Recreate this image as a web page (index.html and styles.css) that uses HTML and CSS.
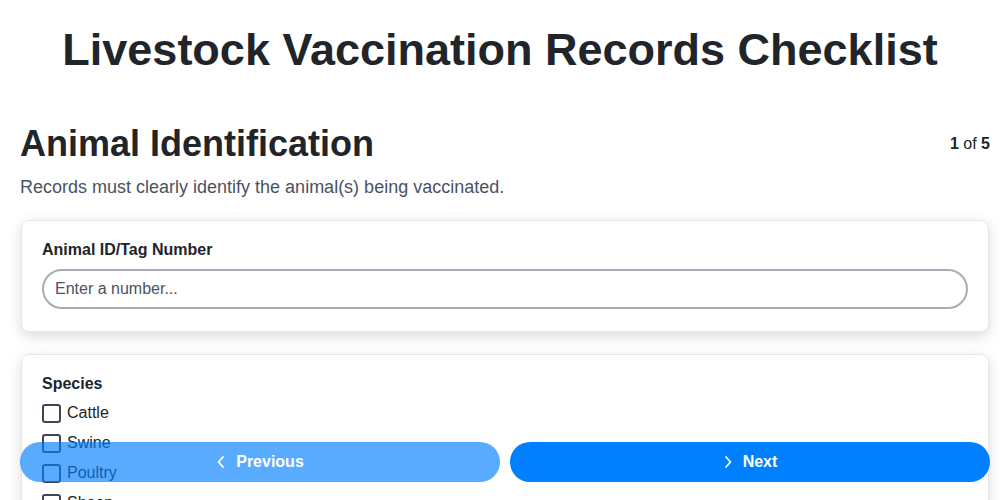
FILE: index.html
```html
<!DOCTYPE html>
<html>
<head>
<meta charset="utf-8">
<link rel="stylesheet" href="styles.css">
</head>
<body>
<h1 class="title">Livestock Vaccination Records Checklist</h1>
<main class="page">
  <div class="section-head">
    <h2 class="section-title">Animal Identification</h2>
    <div class="counter"><b>1</b> of <b>5</b></div>
  </div>
  <p class="section-desc">Records must clearly identify the animal(s) being vaccinated.</p>
  <div class="card card-id">
    <label class="field-label">Animal ID/Tag Number</label>
    <input class="text-input" type="text" placeholder="Enter a number...">
  </div>
  <div class="card">
    <div class="field-label">Species</div>
    <div class="options">
      <label class="option"><span class="box"></span>Cattle</label>
      <label class="option"><span class="box"></span>Swine</label>
      <label class="option"><span class="box"></span>Poultry</label>
      <label class="option"><span class="box"></span>Sheep</label>
      <label class="option"><span class="box"></span>Goats</label>
    </div>
  </div>
</main>
<nav class="nav">
  <button class="btn btn-prev"><svg width="10" height="16" viewBox="0 0 10 16"><path d="M7 3 L2.5 8 L7 13" fill="none" stroke="#fff" stroke-width="1.8" stroke-linecap="round" stroke-linejoin="round"/></svg>Previous</button>
  <button class="btn btn-next"><svg width="10" height="16" viewBox="0 0 10 16"><path d="M3 3 L7.5 8 L3 13" fill="none" stroke="#fff" stroke-width="1.8" stroke-linecap="round" stroke-linejoin="round"/></svg>Next</button>
</nav>
</body>
</html>
```
FILE: styles.css
```css
* { box-sizing: border-box; }
body {
  margin: 0;
  background: #fff;
  font-family: "Liberation Sans", Arial, sans-serif;
  color: #212529;
}
.title {
  margin: 0;
  padding-top: 25px;
  font-size: 45px;
  line-height: 50px;
  font-weight: bold;
  text-align: center;
}
.page {
  padding: 0 10px 100px 20px;
  margin-top: 49px;
}
.section-head {
  display: flex;
  justify-content: space-between;
  align-items: center;
}
.section-title {
  margin: 0;
  font-size: 36px;
  line-height: 40px;
  font-weight: bold;
}
.counter {
  font-size: 16px;
  color: #212529;
}
.section-desc {
  margin: 12px 0 22px;
  font-size: 18px;
  line-height: 22px;
  color: #4a5263;
}
.card {
  margin: 0 1px 22px;
  border: 1px solid #e6e7ea;
  border-radius: 8px;
  background: #fff;
  padding: 20px;
  box-shadow: 0 4px 14px rgba(0, 0, 0, 0.15);
}
.card-id { padding-bottom: 22px; }
.field-label {
  display: block;
  font-size: 16px;
  line-height: 20px;
  font-weight: bold;
  margin-bottom: 9px;
  margin-top: -1px;
}
.text-input {
  display: block;
  width: 100%;
  height: 40px;
  border: 2px solid #a5aeb8;
  border-radius: 20px;
  padding: 0 11px;
  font-family: "Liberation Sans", Arial, sans-serif;
  font-size: 16px;
  color: #212529;
  background: #fff;
  outline: none;
}
.text-input::placeholder { color: #4a5263; }
.options {
  display: flex;
  flex-direction: column;
  gap: 10px;
  margin-top: 0;
}
.option {
  display: flex;
  align-items: center;
  gap: 6px;
  font-size: 16px;
  line-height: 20px;
  color: #212529;
}
.box {
  width: 19px;
  height: 19px;
  border: 2px solid #3d4556;
  border-radius: 3px;
  background: #fff;
}
.nav {
  position: fixed;
  left: 20px;
  right: 10px;
  top: 442px;
  display: flex;
  gap: 10px;
}
.btn {
  flex: 1;
  height: 40px;
  border: none;
  border-radius: 20px;
  background: #007fff;
  color: #fff;
  font-family: "Liberation Sans", Arial, sans-serif;
  font-size: 16px;
  font-weight: bold;
  display: flex;
  align-items: center;
  justify-content: center;
  gap: 10px;
}
.btn-prev { opacity: 0.65; }
```
